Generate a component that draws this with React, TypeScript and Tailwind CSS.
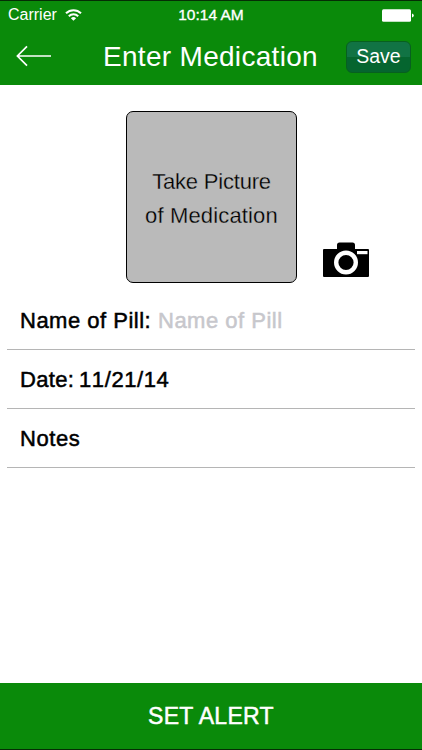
import React from "react";

const medium = "[-webkit-text-stroke:0.5px_currentColor]";

function StatusBar() {
  return (
    <div className="flex h-[29px] items-center border-t border-[#052d05] pl-2 pr-2">
      <div className="flex flex-1 items-center">
        <span className="text-[16px] leading-[28px]">Carrier</span>
        <svg className="ml-2 h-[12px] w-[17px]" viewBox="0 0 17 12" fill="none" stroke="white">
          <path d="M1 4.3a10.6 10.6 0 0 1 15 0" strokeWidth="2" />
          <path d="M3.8 7.2a6.7 6.7 0 0 1 9.4 0" strokeWidth="2" />
          <path d="M8.5 11.8 5.9 9.2a3.8 3.8 0 0 1 5.2 0z" fill="white" stroke="none" />
        </svg>
      </div>
      <span className="text-[15.5px] leading-[28px] [-webkit-text-stroke:0.35px_currentColor]">10:14 AM</span>
      <div className="flex flex-1 items-center justify-end">
        <svg className="h-[13px] w-[32px]" viewBox="0 0 32 13" fill="white">
          <rect x="0" y="0.3" width="29" height="12.4" rx="1.5" />
          <path d="M30 4.5q1.8.3 1.8 2t-1.8 2z" />
        </svg>
      </div>
    </div>
  );
}

function Header() {
  return (
    <header className="h-[85px] bg-[#0a8a0a] text-white">
      <StatusBar />
      <div className="flex h-[55px] items-center pl-4 pr-[11px]">
        <button className="w-[87px] pb-[2px]" aria-label="Back">
          <svg className="h-[22px] w-[36px]" viewBox="0 0 36 22" fill="none" stroke="white" strokeWidth="1.7">
            <path d="M35 11H1.7M11 1.3 1.4 11l9.6 9.7" />
          </svg>
        </button>
        <h1 className="flex-1 whitespace-nowrap pt-px text-[28px] leading-[54px] tracking-[0.3px]">Enter Medication</h1>
        <button className="h-[32px] w-[65px] rounded-[6px] border border-[#07601f] bg-linear-to-b from-[#117344] from-50% to-[#05652f] to-50% text-[19.5px] leading-[29px]">
          Save
        </button>
      </div>
    </header>
  );
}

function Camera() {
  return (
    <svg className="mb-[5px] ml-[26px] h-[36px] w-[47px]" viewBox="0 0 47 36">
      <path d="M1 7h13V3q0-2.5 2.5-2.5h13Q32 .5 32 3v4h13q1 0 1 1v26q0 1-1 1H1q-1 0-1-1V8q0-1 1-1z" fill="black" />
      <circle cx="23" cy="20.5" r="9.8" fill="black" stroke="white" strokeWidth="4.4" />
      <rect x="34" y="9" width="10.5" height="3.2" fill="white" />
    </svg>
  );
}

function Row({ children }: { children: React.ReactNode }) {
  return (
    <div className={`mx-[7px] flex h-[59px] items-center border-b border-[#b5b5b5] pl-[13px] text-[22px] [font-kerning:none] ${medium}`}>
      {children}
    </div>
  );
}

export default function App() {
  return (
    <main className="flex h-[750px] w-[422px] flex-col bg-white font-['Liberation_Sans',sans-serif] text-black">
      <Header />
      <div className="flex items-end pl-[126px] pt-[26px]">
        <div className="flex h-[172px] w-[171px] flex-col items-center justify-center rounded-[7px] border-[1.5px] border-black bg-[#bababa] pt-[3px] text-[22px] leading-[34px] text-black [-webkit-text-stroke:0.3px_#bababa]">
          <span className="tracking-[-0.2px]">Take Picture</span>
          <span className="tracking-[0.15px]">of Medication</span>
        </div>
        <Camera />
      </div>
      <section className="mt-[8px]">
        <Row>
          <span className="w-[138px] tracking-[0.5px]">Name of Pill:</span>
          <span className="tracking-[0.5px] text-[#c7c7cc]">Name of Pill</span>
        </Row>
        <Row>
          <span className="w-[59px] tracking-[0.3px]">Date:</span>
          <span className="tracking-[0.6px]">11/21/14</span>
        </Row>
        <Row>
          <span className="tracking-[0.6px]">Notes</span>
        </Row>
      </section>
      <button className={`mt-auto h-[67px] border-b border-[#052d05] bg-[#0a8a0a] text-[23px] tracking-[0.3px] text-white ${medium}`}>
        SET ALERT
      </button>
    </main>
  );
}
